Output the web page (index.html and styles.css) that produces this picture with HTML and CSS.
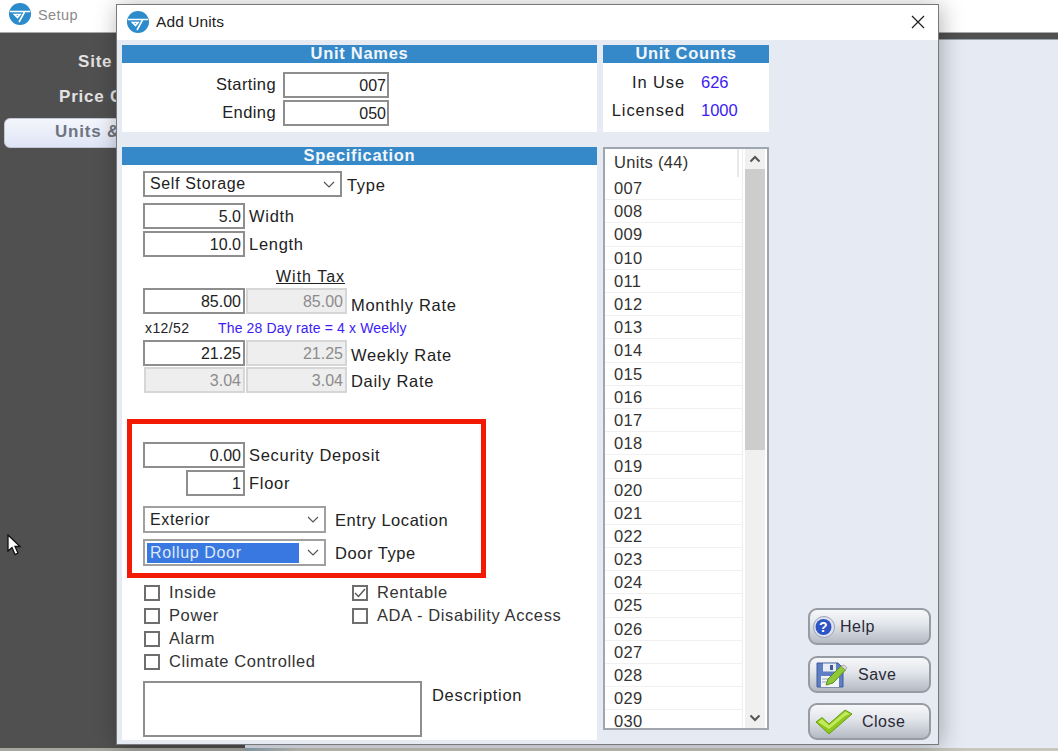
FILE: index.html
```html
<!DOCTYPE html>
<html lang="en">
<head>
    <meta charset="UTF-8">
    <meta name="viewport" content="width=device-width, initial-scale=1.0">
    <title>Add Units</title>
    <link rel="stylesheet" href="styles.css">
</head>
<body>
    <header class="app-bar">
        <svg class="logo" viewBox="0 0 22 22"><circle cx="11" cy="11" r="11" fill="#2b8bcb"/><path d="M1 8.5H21M5.5 11.5H11L8.5 14.5ZM15.5 9L10 19" fill="none" stroke="#fff" stroke-width="1.6"/></svg>
        <span class="app-title">Setup</span>
    </header>

    <div class="app-main">
        <nav class="sidebar">
            <div class="nav-item nav-site">Site</div>
            <div class="nav-item nav-price">Price C</div>
            <div class="nav-item nav-active">Units &amp;</div>
        </nav>
        <div class="workspace">
            <div class="workspace-strip"></div>
        </div>
    </div>
    <div class="app-foot"></div>

    <svg class="cursor" viewBox="0 0 16 22"><path d="M1 1V17L5 13.5L8 20.5L11 19L8 12.5H13Z" fill="#fff" stroke="#111" stroke-width="1.3"/></svg>

    <div class="dialog">
        <div class="dialog-title">
            <svg class="logo" viewBox="0 0 22 22"><circle cx="11" cy="11" r="11" fill="#2b8bcb"/><path d="M1 8.5H21M5.5 11.5H11L8.5 14.5ZM15.5 9L10 19" fill="none" stroke="#fff" stroke-width="1.6"/></svg>
            <span>Add Units</span>
            <svg class="close-x" viewBox="0 0 14 14"><path d="M1 1L13 13M13 1L1 13" stroke="#222" stroke-width="1.3"/></svg>
        </div>

        <div class="dialog-body">
            <div class="dialog-grid">
                <section class="panel panel-names">
                    <h2 class="panel-head">Unit Names</h2>
                    <div class="name-row">
                        <label>Starting</label>
                        <input class="field field-name" type="text" value="007">
                    </div>
                    <div class="name-row">
                        <label>Ending</label>
                        <input class="field field-name" type="text" value="050">
                    </div>
                </section>

                <section class="panel panel-counts">
                    <h2 class="panel-head">Unit Counts</h2>
                    <div class="count-grid">
                        <span class="count-label">In Use</span><span class="count-value">626</span>
                        <span class="count-label">Licensed</span><span class="count-value">1000</span>
                    </div>
                </section>

                <section class="panel panel-spec">
                    <h2 class="panel-head">Specification</h2>

                    <div class="row row-type">
                        <div class="select select-type"><span>Self Storage</span><svg class="chevron" viewBox="0 0 12 7"><path d="M1 1L6 6L11 1" fill="none" stroke="#555" stroke-width="1.2"/></svg></div>
                        <label>Type</label>
                    </div>
                    <div class="row row-width">
                        <input class="field" type="text" value="5.0">
                        <label>Width</label>
                    </div>
                    <div class="row row-length">
                        <input class="field" type="text" value="10.0">
                        <label>Length</label>
                    </div>

                    <div class="with-tax">With Tax</div>
                    <div class="row row-monthly">
                        <input class="field" type="text" value="85.00">
                        <input class="field field-off" type="text" value="85.00" disabled>
                        <label>Monthly Rate</label>
                    </div>
                    <div class="note-row">
                        <span class="note-factor">x12/52</span>
                        <span class="note-blue">The 28 Day rate = 4 x Weekly</span>
                    </div>
                    <div class="row row-weekly">
                        <input class="field" type="text" value="21.25">
                        <input class="field field-off" type="text" value="21.25" disabled>
                        <label>Weekly Rate</label>
                    </div>
                    <div class="row row-daily">
                        <input class="field field-off" type="text" value="3.04" disabled>
                        <input class="field field-off" type="text" value="3.04" disabled>
                        <label>Daily Rate</label>
                    </div>

                    <div class="row row-deposit">
                        <input class="field" type="text" value="0.00">
                        <label>Security Deposit</label>
                    </div>
                    <div class="row row-floor">
                        <input class="field field-floor" type="text" value="1">
                        <label>Floor</label>
                    </div>
                    <div class="row row-entry">
                        <div class="select select-wide"><span>Exterior</span><svg class="chevron" viewBox="0 0 12 7"><path d="M1 1L6 6L11 1" fill="none" stroke="#555" stroke-width="1.2"/></svg></div>
                        <label>Entry Location</label>
                    </div>
                    <div class="row row-door">
                        <div class="select select-wide"><span class="selected">Rollup Door</span><svg class="chevron" viewBox="0 0 12 7"><path d="M1 1L6 6L11 1" fill="none" stroke="#555" stroke-width="1.2"/></svg></div>
                        <label>Door Type</label>
                    </div>

                    <div class="checks">
                        <div class="check"><span class="box"></span>Inside</div>
                        <div class="check"><span class="box"><svg viewBox="0 0 16 16"><path d="M3 8L6.5 11.5L13 4" fill="none" stroke="#555" stroke-width="1.4"/></svg></span>Rentable</div>
                        <div class="check"><span class="box"></span>Power</div>
                        <div class="check"><span class="box"></span>ADA - Disability Access</div>
                        <div class="check"><span class="box"></span>Alarm</div>
                        <div class="check"></div>
                        <div class="check"><span class="box"></span>Climate Controlled</div>
                    </div>

                    <div class="row-description">
                        <textarea class="description"></textarea>
                        <label>Description</label>
                    </div>

                    <div class="callout"></div>
                </section>

                <section class="unit-list">
                    <div class="unit-rows">
                        <div class="unit-head">Units (44)</div>
                        <div class="unit-row">007</div>
                        <div class="unit-row">008</div>
                        <div class="unit-row">009</div>
                        <div class="unit-row">010</div>
                        <div class="unit-row">011</div>
                        <div class="unit-row">012</div>
                        <div class="unit-row">013</div>
                        <div class="unit-row">014</div>
                        <div class="unit-row">015</div>
                        <div class="unit-row">016</div>
                        <div class="unit-row">017</div>
                        <div class="unit-row">018</div>
                        <div class="unit-row">019</div>
                        <div class="unit-row">020</div>
                        <div class="unit-row">021</div>
                        <div class="unit-row">022</div>
                        <div class="unit-row">023</div>
                        <div class="unit-row">024</div>
                        <div class="unit-row">025</div>
                        <div class="unit-row">026</div>
                        <div class="unit-row">027</div>
                        <div class="unit-row">028</div>
                        <div class="unit-row">029</div>
                        <div class="unit-row">030</div>
                    </div>
                    <div class="scrollbar">
                        <div class="scroll-btn"><svg viewBox="0 0 12 8"><path d="M1.5 6.5L6 2L10.5 6.5" fill="none" stroke="#555" stroke-width="2"/></svg></div>
                        <div class="scroll-thumb"></div>
                        <div class="scroll-track"></div>
                        <div class="scroll-btn"><svg viewBox="0 0 12 8"><path d="M1.5 1.5L6 6L10.5 1.5" fill="none" stroke="#555" stroke-width="2"/></svg></div>
                    </div>
                </section>
            </div>

            <div class="actions">
                <button class="btn btn-help">
                    <svg class="icon-help" viewBox="0 0 22 22"><circle cx="11" cy="11" r="10.5" fill="#dfe4ef" stroke="#9aa3b5"/><circle cx="10.5" cy="11" r="8" fill="#2f55c4"/><text x="10.5" y="16" text-anchor="middle" class="help-mark">?</text></svg>
                    <span>Help</span>
                </button>
                <button class="btn btn-save">
                    <svg class="icon-save" viewBox="0 0 32 26"><path d="M1 1H22L27 6V25H1Z" fill="#5f7fc4" stroke="#3f5a9c"/><rect x="7" y="1.5" width="13" height="8" fill="#e8ecf5"/><rect x="14" y="3" width="3" height="5" fill="#3f5a9c"/><rect x="5" y="14" width="18" height="11" fill="#f2f3f7"/><path d="M6 17H20M6 20H17" stroke="#9aa5c0"/><path d="M10 23L12 17L25 4L29.5 8L17 21Z" fill="#8fc93a" stroke="#5d8f1e"/><path d="M25 4L29.5 8L31 5.5L28 3Z" fill="#ddd" stroke="#888" stroke-width=".6"/></svg>
                    <span>Save</span>
                </button>
                <button class="btn btn-close">
                    <svg class="icon-check" viewBox="0 0 38 26"><path d="M1 13L7 8.5L14 15L30 1L37 5L14 25Z" fill="#8cc81e" stroke="#6c9f12"/><path d="M3 13L7 10L14 16.5L30.5 2.5L35 5L30 7L14 20Z" fill="#c4ea5c"/></svg>
                    <span>Close</span>
                </button>
            </div>
        </div>
    </div>
</body>
</html>
```

FILE: styles.css
```css
* {
    margin: 0;
    padding: 0;
    box-sizing: border-box;
    font-family: 'Liberation Sans', Arial, sans-serif;
}

body {
    width: 1058px;
    height: 751px;
    overflow: hidden;
    position: relative;
    display: flex;
    flex-direction: column;
    background-color: #e6eaf3;
}

label {
    font-size: 16.5px;
    letter-spacing: 0.7px;
    color: #222;
}

/* window behind the dialog */
.app-bar {
    height: 33px;
    flex: none;
    display: flex;
    align-items: center;
    gap: 7px;
    padding-left: 9px;
    background-color: #fff;
    border-bottom: 1px solid #aaa;
}

.app-bar .logo {
    width: 22px;
    height: 22px;
    margin-top: -4px;
}

.app-title {
    font-size: 14.5px;
    letter-spacing: 0.4px;
    color: #8a8a8a;
    margin-top: -3px;
}

.app-main {
    flex: 1;
    display: flex;
}

.sidebar {
    width: 245px;
    flex: none;
    padding: 17px 0 0 4px;
    background-color: #505050;
}

.nav-item {
    height: 30px;
    margin-bottom: 5px;
    line-height: 24px;
    font-size: 17px;
    letter-spacing: 0.8px;
    font-weight: bold;
    color: #e2e2e2;
    white-space: nowrap;
}

.nav-site {
    padding-left: 74px;
}

.nav-price {
    padding-left: 55px;
}

.nav-active {
    margin-top: -2px;
    padding-left: 50px;
    line-height: 25px;
    color: #6f7480;
    background: linear-gradient(#f4f6fc, #dfe5f6);
    border: 1px solid #c2c7d4;
    border-radius: 6px;
}

.workspace {
    flex: 1;
    background-color: #e6eaf3;
}

.workspace-strip {
    height: 7px;
    background-color: #505050;
    border-bottom: 1px solid #9aa3b0;
}

.app-foot {
    height: 3px;
    flex: none;
    background: linear-gradient(90deg, #a8a8a0 245px, #8fa9b8 245px, #c9c7bd 300px);
}

.cursor {
    position: absolute;
    left: 7px;
    top: 534px;
    width: 16px;
    height: 22px;
}

/* dialog */
.dialog {
    position: absolute;
    left: 116px;
    top: 4px;
    width: 823px;
    height: 741px;
    display: flex;
    flex-direction: column;
    background-color: #e6eaf3;
    border: 1px solid #77797d;
    box-shadow: 2px 2px 22px rgba(0, 0, 0, 0.3);
}

.dialog-title {
    height: 35px;
    flex: none;
    display: flex;
    align-items: center;
    padding: 0 13px 2px 10px;
    background-color: #fff;
    font-size: 15.5px;
    letter-spacing: 0.1px;
    color: #222;
}

.dialog-title .logo {
    width: 22px;
    height: 22px;
    margin-right: 7px;
}

.close-x {
    width: 14px;
    height: 14px;
    margin-left: auto;
}

.dialog-body {
    flex: 1;
    display: flex;
    justify-content: space-between;
    padding: 5px 7px 4px 5px;
}

.dialog-grid {
    display: grid;
    grid-template-columns: 475px 166px;
    grid-template-rows: 87px 1fr;
    column-gap: 6px;
    row-gap: 15px;
}

.panel {
    position: relative;
    background-color: #fff;
}

.panel-head {
    height: 18px;
    line-height: 17px;
    text-align: center;
    font-size: 16.5px;
    letter-spacing: 0.7px;
    font-weight: bold;
    color: #f2f6fb;
    background-color: #3589c9;
}

/* unit names */
.name-row {
    display: flex;
    align-items: center;
    justify-content: flex-end;
    height: 26px;
    margin-top: 2px;
    padding-right: 208px;
    font-size: 16px;
}

.panel-names .panel-head + .name-row {
    margin-top: 9px;
}

.name-row label {
    margin-right: 7px;
    margin-top: -2px;
    letter-spacing: 0.4px;
}

.field {
    width: 102px;
    height: 26px;
    flex: none;
    padding: 2px 2px 0 0;
    text-align: right;
    font-size: 16px;
    color: #222;
    background-color: #fff;
    border: 2px solid #8e8e8e;
    border-radius: 0;
    outline: none;
}

.field-name {
    width: 106px;
    padding-right: 1px;
}

.field-off {
    width: 101px;
    margin-left: 1px;
    color: #8c8c8c;
    background-color: #eee;
    border-color: #d6d6d6;
}

.field-floor {
    width: 59px;
    margin-left: 43px;
}

/* unit counts */
.count-grid {
    display: grid;
    grid-template-columns: 82px auto;
    column-gap: 16px;
    row-gap: 8px;
    padding-top: 9px;
    font-size: 16.5px;
    line-height: 20px;
}

.count-label {
    text-align: right;
    letter-spacing: 0.9px;
    color: #222;
}

.count-value {
    color: #3b1cf5;
}

/* specification form */
.panel-spec {
    height: 593px;
    padding-left: 21px;
}

.panel-spec .panel-head {
    margin-left: -21px;
}

.row {
    display: flex;
    align-items: center;
    height: 26px;
    font-size: 16px;
}

.row label {
    margin-left: 4px;
    padding-top: 3px;
}

.row-type {
    margin-top: 6px;
}

.row-type label {
    margin-left: 5px;
}

.row-width {
    margin-top: 6px;
}

.row-length {
    margin-top: 2px;
}

.row-width label,
.row-length label {
    padding-top: 0;
}

.with-tax {
    height: 18px;
    margin-top: 11px;
    margin-left: 133px;
    line-height: 18px;
    font-size: 16px;
    letter-spacing: 1px;
    text-decoration: underline;
    color: #222;
}

.row-monthly {
    margin-top: 2px;
}

.row-monthly label {
    padding-top: 9px;
}

.note-row {
    display: flex;
    align-items: center;
    height: 24px;
    margin-top: 2px;
    padding-left: 2px;
    font-size: 14px;
}

.note-factor {
    width: 73px;
    letter-spacing: 0.4px;
    color: #222;
}

.note-blue {
    letter-spacing: 0.15px;
    color: #3b1cf5;
}

.row-weekly label {
    padding-top: 5px;
}

.row-daily {
    margin-top: 1px;
}

.row-deposit {
    margin-top: 49px;
}

.row-floor {
    margin-top: 2px;
}

.row-deposit label,
.row-floor label {
    padding-top: 1px;
}

.row-entry {
    margin-top: 10px;
    height: 27px;
}

.row-door {
    margin-top: 6px;
    height: 27px;
}

.row-entry label,
.row-door label {
    margin-left: 9px;
    padding-top: 1px;
    letter-spacing: 0.55px;
}

.select {
    height: 100%;
    flex: none;
    display: flex;
    align-items: center;
    justify-content: space-between;
    padding: 0 5px;
    font-size: 16px;
    letter-spacing: 0.65px;
    color: #222;
    border: 2px solid #a0a0a0;
}

.select-type {
    width: 199px;
    border-color: #8e8e8e;
}

.select-wide {
    width: 183px;
}

.chevron {
    width: 12px;
    height: 7px;
    flex: none;
    margin-left: auto;
}

.selected {
    width: 152px;
    height: 20px;
    margin-left: -3px;
    padding-left: 3px;
    line-height: 20px;
    color: #dfe8fb;
    background-color: #3878e0;
}

.checks {
    display: grid;
    grid-template-columns: 208px auto;
    grid-auto-rows: 23px;
    margin-top: 15px;
    margin-left: 1px;
}

.check {
    display: flex;
    align-items: center;
    gap: 9px;
    font-size: 16.5px;
    letter-spacing: 0.6px;
    color: #333;
}

.box {
    width: 16px;
    height: 16px;
    flex: none;
    background-color: #fff;
    border: 2px solid #6e6e6e;
    position: relative;
}

.box svg {
    width: 16px;
    height: 16px;
    margin: -2px;
    display: block;
}

.row-description {
    display: flex;
    margin-top: 8px;
}

.description {
    width: 279px;
    height: 56px;
    resize: none;
    background-color: #fff;
    border: 2px solid #8e8e8e;
    outline: none;
}

.row-description label {
    margin-left: 10px;
    padding-top: 5px;
}

/* red annotation round the door fields */
.callout {
    position: absolute;
    left: 5px;
    top: 272px;
    width: 359px;
    height: 159px;
    border: 5px solid #f21a05;
}

/* unit list */
.unit-list {
    height: 583px;
    display: flex;
    background-color: #fff;
    border: 2px solid #a0a6ae;
    overflow: hidden;
}

.unit-rows {
    flex: 1;
    min-width: 0;
    font-size: 16.5px;
    letter-spacing: 0.3px;
    color: #333;
    border-right: 1px solid #efefef;
    margin-right: 2px;
}

.unit-head {
    height: 28.1px;
    padding-left: 9px;
    line-height: 27px;
    border-right: 2px solid #e8e8e8;
    margin-right: 3px;
}

.unit-row {
    height: 23.2px;
    padding-left: 9px;
    line-height: 23px;
    border-bottom: 1px solid #f0f0f0;
}

.scrollbar {
    width: 20px;
    flex: none;
    display: flex;
    flex-direction: column;
    margin-right: 2px;
    background-color: #f0f0f0;
}

.scroll-btn {
    height: 20px;
    flex: none;
    display: flex;
    align-items: center;
    justify-content: center;
}

.scroll-btn svg {
    width: 12px;
    height: 8px;
}

.scroll-thumb {
    height: 281px;
    flex: none;
    background-color: #cdcdcd;
}

.scroll-track {
    flex: 1;
}

/* buttons */
.actions {
    width: 123px;
    display: flex;
    flex-direction: column;
    justify-content: flex-end;
    gap: 10px;
}

.btn {
    position: relative;
    height: 37px;
    flex: none;
    display: flex;
    align-items: center;
    font-size: 16px;
    letter-spacing: 0.5px;
    color: #2a2a38;
    background: linear-gradient(#f6f7f9, #e4e7ec 40%, #b4bac4);
    border: 2px solid #979ba2;
    border-radius: 9px;
}

.btn-help {
    padding-left: 3px;
    margin-bottom: 1px;
}

.btn-help span {
    margin-left: 5px;
}

.icon-help {
    width: 22px;
    height: 22px;
}

.help-mark {
    font-size: 14px;
    font-weight: bold;
    fill: #fff;
}

.btn-save {
    padding-left: 6px;
}

.btn-save span {
    margin-left: 10px;
}

.icon-save {
    width: 32px;
    height: 26px;
}

.btn-close {
    padding-left: 5px;
}

.btn-close span {
    margin-left: 9px;
}

.icon-check {
    width: 38px;
    height: 26px;
}
```
